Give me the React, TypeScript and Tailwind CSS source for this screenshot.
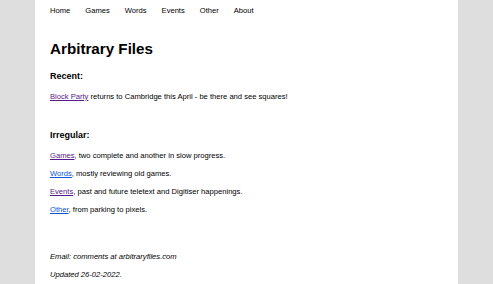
export default function App() {
  const font = { fontFamily: '"Liberation Sans", Arial, sans-serif' };
  const purple = "text-[#551a8b]";
  const blue = "text-[#0b55d8]";
  return (
    <div className="min-h-[284px] w-full bg-[#dedede]" style={font}>
      <div className="mx-auto w-[423px] min-h-[284px] bg-white pl-[15px] pr-[15px] pt-[2px] text-[7.6px] text-black">
        <nav className="flex gap-[15px] leading-[18px]">
          <span>Home</span>
          <span>Games</span>
          <span>Words</span>
          <span>Events</span>
          <span>Other</span>
          <span>About</span>
        </nav>
        <h1 className="mt-[20px] text-[15.2px] font-bold leading-[18px]">Arbitrary Files</h1>
        <h3 className="mt-[9px] text-[9px] font-bold leading-[18px]">Recent:</h3>
        <p className="mt-[3px] leading-[18px]">
          <a className={`${purple} underline`}>Block Party</a> returns to Cambridge this April - be there and see squares!
        </p>
        <h3 className="mt-[20px] text-[9px] font-bold leading-[18px]">Irregular:</h3>
        <p className="mt-[3px] leading-[18px]">
          <a className={`${purple} underline`}>Games</a>, two complete and another in slow progress.
        </p>
        <p className="leading-[18px]">
          <a className={`${blue} underline`}>Words</a>, mostly reviewing old games.
        </p>
        <p className="leading-[18px]">
          <a className={`${purple} underline`}>Events</a>, past and future teletext and Digitiser happenings.
        </p>
        <p className="leading-[18px]">
          <a className={`${blue} underline`}>Other</a>, from parking to pixels.
        </p>
        <p className="mt-[29px] italic leading-[18px]">Email: comments at arbitraryfiles.com</p>
        <p className="italic leading-[18px]">Updated 26-02-2022.</p>
      </div>
    </div>
  );
}
